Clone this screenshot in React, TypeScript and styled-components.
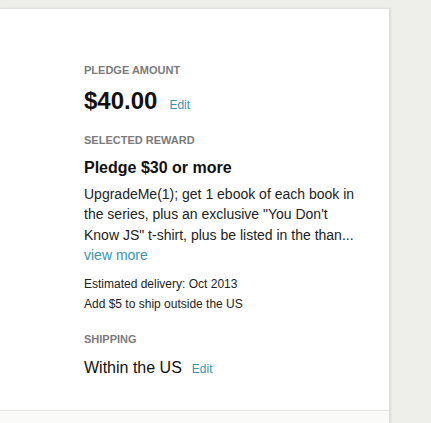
import React from "react";
import styled, { createGlobalStyle } from "styled-components";

const Global = createGlobalStyle`
  html, body { margin: 0; padding: 0; background: #eeeeea; }
  body { font-family: "Liberation Sans", Arial, Helvetica, sans-serif; }
`;

const Page = styled.div`
  padding-top: 8px;
  width: 431px;
  height: 423px;
  box-sizing: border-box;
  overflow: hidden;
`;

const Card = styled.div`
  width: 390px;
  box-sizing: border-box;
  background: #ffffff;
  border-top: 1px solid #e2e2de;
  border-right: 1px solid #dcdcd8;
  box-shadow: 1px 0 2px rgba(0, 0, 0, 0.08);
`;

const Body = styled.div`
  padding: 54px 0 0 84px;
  height: 402px;
  box-sizing: border-box;
  border-bottom: 1px solid #e8e8e4;
`;

const Footer = styled.div`
  height: 20px;
  background: #fafaf8;
`;

const Label = styled.div<{ $mt?: number }>`
  font-size: 11px;
  line-height: 14px;
  font-weight: 700;
  color: #7b7b7b;
  text-transform: uppercase;
  margin-top: ${(p) => p.$mt ?? 0}px;
`;

const ValueRow = styled.div<{ $mt: number }>`
  display: flex;
  align-items: baseline;
  margin-top: ${(p) => p.$mt}px;
`;

const Amount = styled.span`
  font-size: 24px;
  line-height: 28px;
  font-weight: 700;
  color: #111;
`;

const Plain = styled.span`
  font-size: 16px;
  line-height: 20px;
  color: #111;
`;

const EditLink = styled.a<{ $ml: number }>`
  font-size: 12px;
  color: #3a93b0;
  text-decoration: none;
  margin-left: ${(p) => p.$ml}px;
`;

const Title = styled.div`
  margin-top: 11px;
  font-size: 16px;
  line-height: 20px;
  font-weight: 700;
  color: #111;
`;

const Desc = styled.p`
  margin: 6px 0 0;
  width: 278px;
  font-size: 14px;
  line-height: 20.3px;
  color: #222;
`;

const More = styled.a`
  display: block;
  color: #3a93b0;
  text-decoration: none;
`;

const Small = styled.div`
  font-size: 12px;
  line-height: 20px;
  color: #222;
`;

const Details = styled.div`
  margin-top: 9px;
`;

export default function App() {
  return (
    <Page>
      <Global />
      <Card>
        <Body>
          <Label>Pledge Amount</Label>
          <ValueRow $mt={10}>
            <Amount>$40.00</Amount>
            <EditLink $ml={12}>Edit</EditLink>
          </ValueRow>
          <Label $mt={18}>Selected Reward</Label>
          <Title>Pledge $30 or more</Title>
          <Desc>
            UpgradeMe(1); get 1 ebook of each book in the series, plus an exclusive "You Don't
            Know JS" t-shirt, plus be listed in the than...
            <More>view more</More>
          </Desc>
          <Details>
            <Small>Estimated delivery: Oct 2013</Small>
            <Small>Add $5 to ship outside the US</Small>
          </Details>
          <Label $mt={18}>Shipping</Label>
          <ValueRow $mt={12}>
            <Plain>Within the US</Plain>
            <EditLink $ml={10}>Edit</EditLink>
          </ValueRow>
        </Body>
        <Footer />
      </Card>
    </Page>
  );
}
